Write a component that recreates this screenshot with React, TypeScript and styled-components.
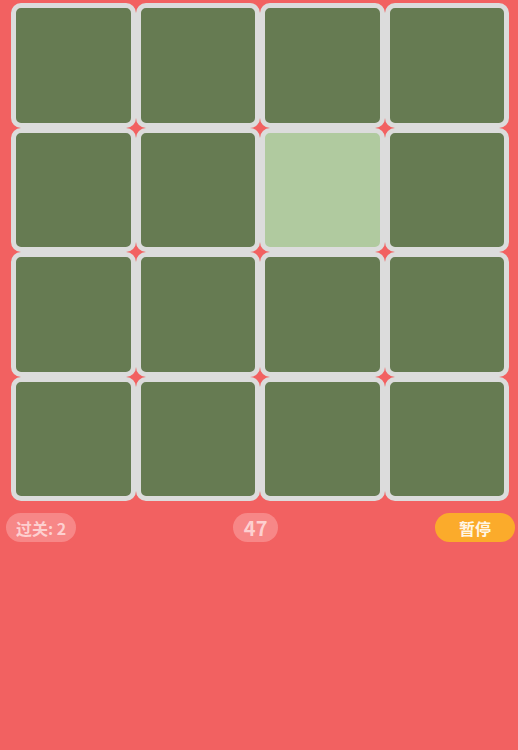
import styled, { createGlobalStyle } from "styled-components";

const GlobalStyle = createGlobalStyle`
  html, body {
    margin: 0;
    padding: 0;
    background: #f26161;
    font-family: "Noto Sans CJK SC", "Noto Sans", sans-serif;
  }
`;

const ACTIVE = 6;

const App = () => {
  const tiles = Array.from({ length: 16 }, (_, i) => i);

  return (
    <Page>
      <GlobalStyle />
      <Board>
        {tiles.map((i) => (
          <Tile key={i} $active={i === ACTIVE} />
        ))}
      </Board>
      <StatusBar>
        <Pill>过关: 2</Pill>
        <Timer>47</Timer>
        <PauseButton>暂停</PauseButton>
      </StatusBar>
    </Page>
  );
};

const Page = styled.div`
  width: 518px;
  height: 750px;
  background: #f26161;
  overflow: hidden;
`;

const Board = styled.div`
  display: grid;
  grid-template-columns: repeat(4, 124.5px);
  grid-auto-rows: 124.5px;
  padding: 3px 0 0 11px;
`;

const Tile = styled.div<{ $active: boolean }>`
  box-sizing: border-box;
  border: 5px solid #dcdcdc;
  border-radius: 10px;
  background: ${(p) => (p.$active ? "#b0ca9f" : "#667b52")};
`;

const StatusBar = styled.div`
  display: flex;
  align-items: center;
  justify-content: space-between;
  margin-top: 12px;
  padding: 0 3px 0 6px;
`;

const Pill = styled.div`
  height: 29px;
  padding: 0 10px;
  border-radius: 15px;
  display: flex;
  align-items: center;
  background: #f78787;
  color: #fdd0d0;
  font-size: 16px;
  font-weight: 700;
`;

const Timer = styled(Pill)`
  padding: 0 11px;
  font-size: 20px;
`;

const PauseButton = styled(Pill)`
  padding: 0 24px;
  background: #fbab2b;
  color: #fff6e6;
`;

export default App;
